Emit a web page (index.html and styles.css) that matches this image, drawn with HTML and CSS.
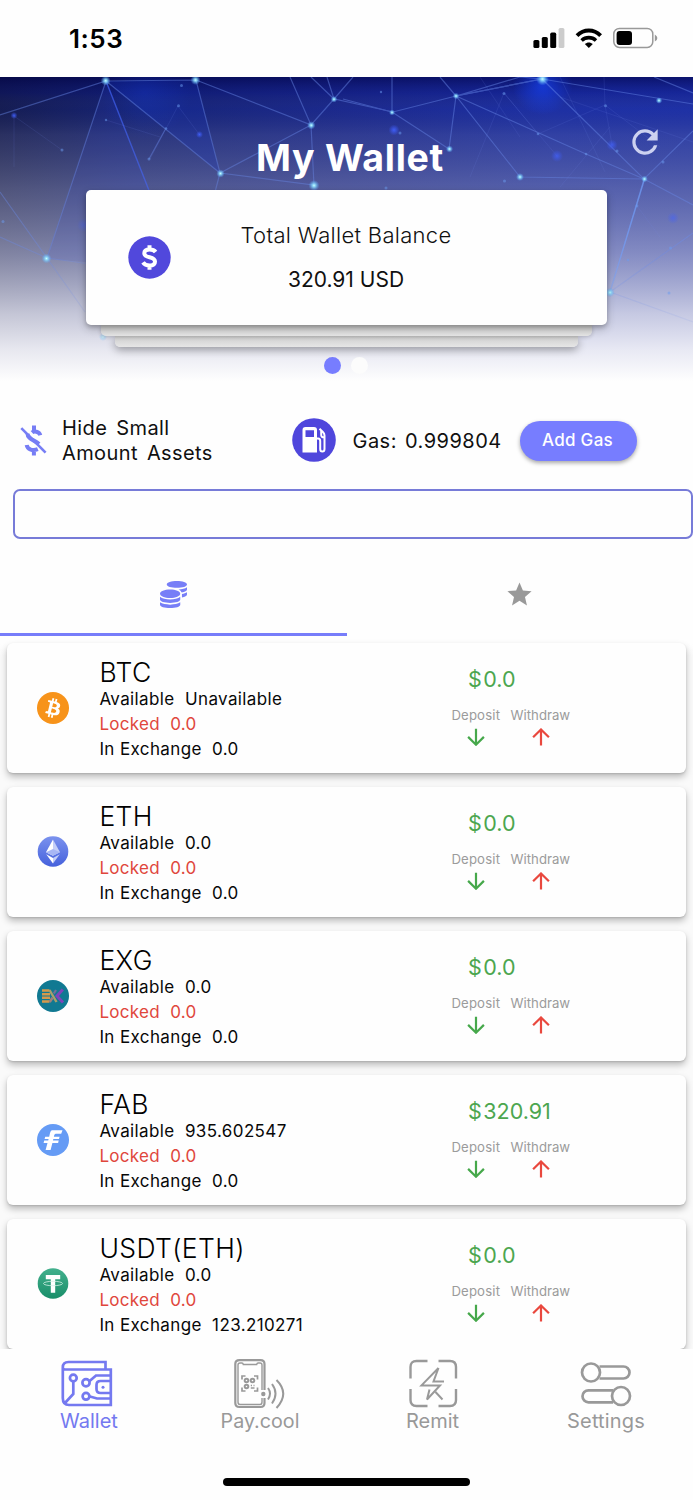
FILE: index.html
```html
<!DOCTYPE html>
<html lang="en">
<head>
<meta charset="utf-8">
<title>My Wallet</title>
<link rel="stylesheet" href="styles.css">
</head>
<body>
<svg class="defs" width="0" height="0" aria-hidden="true">
  <defs>
    <symbol id="down" viewBox="0 0 18 18"><path d="M9 .8V16.6M1.1 8.9L9 16.7L16.9 8.9" fill="none" stroke="currentColor" stroke-width="2.2"/></symbol>
    <symbol id="up" viewBox="0 0 18 18"><path d="M9 17.4V1.6M1.1 9.3L9 1.5L16.9 9.3" fill="none" stroke="currentColor" stroke-width="2.2"/></symbol>
  </defs>
</svg>
<div class="screen">
  <header class="status">
    <span class="time">1:53</span>
    <svg class="status-icons" width="126" height="24" viewBox="532 26 126 24">
      <rect x="533.4" y="40" width="6" height="8" rx="1.6"/><rect x="541.8" y="37" width="6" height="11" rx="1.6"/><rect x="550.2" y="32.6" width="6" height="15.4" rx="1.6"/><rect x="558.6" y="28" width="5.8" height="20" rx="1.6" fill="#ccc"/>
      <path d="M577 35.6C583.8 28.9 593.8 28.9 600.6 35.6" fill="none" stroke="#000" stroke-width="4"/>
      <path d="M581.6 40.5C585.8 36.7 591.8 36.7 596 40.5" fill="none" stroke="#000" stroke-width="3.6"/>
      <path d="M584.8 44.1C587.2 42 590.4 42 592.8 44.1L588.8 48Z"/>
      <rect x="613.8" y="28.4" width="39" height="19" rx="5.6" fill="none" stroke="#999" stroke-width="1.5"/>
      <rect x="616.6" y="31" width="15.4" height="14" rx="3"/>
      <path d="M654.8 34.5Q657.4 36 657.4 38T654.8 41.5Z" fill="#999"/>
    </svg>
  </header>

  <section class="hero">
    <svg class="network" width="693" height="320" viewBox="0 0 693 320">
      <defs>
        <linearGradient id="base"><stop offset="0" stop-color="#111955"/><stop offset=".2" stop-color="#13217a"/><stop offset=".5" stop-color="#182794"/><stop offset=".8" stop-color="#1a2eac"/><stop offset="1" stop-color="#1b2fae"/></linearGradient>
        <linearGradient id="fade" x2="0" y2="1"><stop offset="0" stop-color="#000040" stop-opacity=".6"/><stop offset=".05" stop-color="#0c1060" stop-opacity=".28"/><stop offset=".1" stop-color="#444" stop-opacity=".08"/><stop offset=".18" stop-color="#808088" stop-opacity=".23"/><stop offset=".35" stop-color="#a0a0ac" stop-opacity=".44"/><stop offset=".55" stop-color="#c4c4d0" stop-opacity=".62"/><stop offset=".74" stop-color="#e4e4ec" stop-opacity=".85"/><stop offset=".85" stop-color="#f2f2f7" stop-opacity=".95"/><stop offset=".95" stop-color="#fefefe"/></linearGradient>
        <linearGradient id="lineFade" x2="0" y2="1"><stop offset="0" stop-color="#fff"/><stop offset=".5" stop-color="#ccc"/><stop offset=".75" stop-color="#444"/><stop offset=".85" stop-color="#000"/></linearGradient>
        <mask id="lineMask" maskUnits="userSpaceOnUse" x="0" y="0" width="693" height="320"><rect width="693" height="320" fill="url(#lineFade)"/></mask>
        <radialGradient id="glow"><stop offset="0" stop-color="#1746ff" stop-opacity=".8"/><stop offset="1" stop-color="#1746ff" stop-opacity="0"/></radialGradient>
        <radialGradient id="node"><stop offset="0" stop-color="#cbffff"/><stop offset=".3" stop-color="#8ee0ff" stop-opacity=".85"/><stop offset="1" stop-color="#58a9ff" stop-opacity="0"/></radialGradient>
        <radialGradient id="blue"><stop offset="0" stop-color="#4262ff" stop-opacity=".9"/><stop offset="1" stop-color="#3e5cff" stop-opacity="0"/></radialGradient>
      </defs>
      <rect width="693" height="320" fill="url(#base)"/>
      <rect width="693" height="320" fill="url(#fade)"/>
      <path d="M106 4L196 3L220 96Z" fill="#1738c8" opacity=".22"/>
      <path d="M106 4L46 182L150 190V116Z" fill="#334bd0" opacity=".15"/>
      <circle cx="542.5" cy="8" r="30" fill="url(#glow)" opacity=".8"/>
      <circle cx="145" cy="16" r="46" fill="url(#glow)" opacity=".22"/>
      <g mask="url(#lineMask)">
        <g fill="none" stroke="#6c8cec" stroke-width="1.2" opacity=".45">
          <path d="M0 38L106 4L47 181L0 115M106 4L220 96L311 48L334 22L393 35L456 19L542 2L693 27M106 4L196 3L220 96L314 108L311 48L196 3M220 96L215 115"/>
          <path d="M290 0L311 48M311 0L334 22L327 0M334 22L353 0M343 22L392 35V0M392 35L449 72L456 19L520 100L644 102L586 77L456 19L542 2L644 102L693 54M542 2L520 0L456 19L440 0M644 102L693 128M644 102L610 215L693 156M610 215L693 245M0 160L47 181L90 187L47 181L85 235M166 51L149 82M654 0L693 16"/>
        </g>
        <path d="M106 4L150 116" fill="none" stroke="#4568ff" stroke-width="1.4" opacity=".65"/>
        <path d="M644.5 102L610 215" stroke="#74a5ff" stroke-width="1.4" opacity=".7"/>
        <path d="M504 16L470 100M538 57L504 16L557 79M605 28L612 68M605 28L538 57M605 28L660 70M178 29L199 57M178 29L150 82M62 73L14 39V90M106 43L160 60M637 129L660 160M604 0L605 28M480 0L520 60M560 0L605 95M610 50L560 110M560 20L693 65" fill="none" stroke="#7b8df0" stroke-width=".8" opacity=".17"/>
      </g>
      <g fill="url(#node)">
        <circle cx="105.7" cy="3.7" r="5"/><circle cx="195.5" cy="3" r="5"/><circle cx="220.5" cy="96.5" r="4.2"/><circle cx="311.3" cy="48.3" r="4.2"/><circle cx="314" cy="108.5" r="5.5"/><circle cx="334" cy="22.3" r="3.3"/><circle cx="46.5" cy="181.5" r="5"/><circle cx="392" cy="35.5" r="3"/><circle cx="456" cy="19" r="3.3"/><circle cx="449.5" cy="72" r="3.6"/><circle cx="542.5" cy="2" r="6.5"/><circle cx="520" cy="100" r="4"/><circle cx="644.5" cy="102" r="3.4"/><circle cx="610" cy="215.5" r="4.6"/><circle cx="659" cy="23.5" r="3.3"/><circle cx="103" cy="260" r="4" opacity=".5"/>
      </g>
      <g fill="url(#blue)">
        <circle cx="14" cy="38.5" r="3.5"/><circle cx="199.5" cy="57.5" r="3.5"/><circle cx="394" cy="53" r="5.5"/><circle cx="557" cy="79" r="6" opacity=".8"/><circle cx="612" cy="68" r="5.5" opacity=".8"/><circle cx="673" cy="141" r="6" opacity=".6"/><circle cx="84" cy="148" r="7" opacity=".4"/>
      </g>
      <g fill="#6c9cf0" opacity=".5">
        <circle cx="62" cy="73" r="1.5"/><circle cx="106" cy="43" r="1.2"/><circle cx="178.5" cy="28.7" r="1.5"/><circle cx="181.5" cy="8.5" r="1.5"/><circle cx="166" cy="51.5" r="1.3"/><circle cx="149" cy="82" r="1.5"/><circle cx="3" cy="144.5" r="1.5"/><circle cx="504" cy="16.5" r="1.5"/><circle cx="381" cy="15" r="1.2"/><circle cx="400" cy="56" r="1.5"/><circle cx="386" cy="111" r="1.5"/><circle cx="538" cy="57" r="1.3"/><circle cx="504.5" cy="104" r="1.5"/><circle cx="605.5" cy="28.7" r="1.5"/><circle cx="617" cy="74" r="1.5"/><circle cx="586" cy="77" r="1.3"/><circle cx="637" cy="129" r="1.4"/><circle cx="663" cy="85" r="1.5"/><circle cx="670.5" cy="171" r="1.5"/><circle cx="628" cy="183" r="1.3"/><circle cx="669" cy="216" r="1.5"/>
      </g>
    </svg>
    <div class="titlebar">
      <h1 class="title">My Wallet</h1>
      <svg class="refresh" width="38" height="38" viewBox="0 0 24 24"><path fill="#ccd1f0" d="M17.65 6.35A7.96 7.96 0 0 0 12 4a8 8 0 1 0 7.73 10h-2.08A6 6 0 1 1 12 6c1.66 0 3.14.69 4.22 1.78L13 11h7V4z"/></svg>
    </div>
    <div class="stack">
      <div class="balance">
        <svg class="coin" width="43" height="43" viewBox="0 0 43 43"><circle cx="21.5" cy="21.5" r="21.2" fill="#5148dc"/><path d="M27.6 16C26.2 14 24.3 13.6 21.5 13.6C18.3 13.6 16.3 15 16.3 17.2C16.3 22.9 27 19.6 27 25.6C27 28.2 24.8 29.6 21.5 29.6C18.6 29.6 16.4 28.6 15 26.4M21.5 9.3V13.5M21.5 29.5V33.7" fill="none" stroke="#fff" stroke-width="4"/></svg>
        <div class="balance-text"><span class="balance-label">Total Wallet Balance</span><span class="balance-value">320.91 USD</span></div>
      </div>
      <div class="layer layer-two"></div>
      <div class="layer layer-three"></div>
    </div>
    <div class="dots"><i class="dot active"></i><i class="dot"></i></div>
  </section>

  <section class="tools">
    <svg class="hide-icon" width="27" height="31" viewBox="0 0 27 31"><path d="M12 7.5C14 5.6 19.2 6.4 20.3 10.3M14 .5V6M6.7 20.1C7.3 24.6 13 26.2 17.8 24.2M13.9 25V30.5M7.5 8.4C7.5 14.5 15 15 19 19" fill="none" stroke="#767df5" stroke-width="4"/><path d="M1.3 3.2L25.6 27.6" fill="none" stroke="#767df5" stroke-width="2.6"/></svg>
    <p class="hide-text">Hide Small<br>Amount Assets</p>
    <svg class="gas-icon" width="44" height="44" viewBox="0 0 44 44"><circle cx="22" cy="22" r="21.8" fill="#4f46dc"/><path fill="#fff" fill-rule="evenodd" d="M13.5 9H22Q25 9 25 12V34.5H10.5V12Q10.5 9 13.5 9ZM13.5 12.2V19H22V12.2Z"/><path d="M24.5 20.5H26.2Q28.2 20.5 28.2 23V31C28.2 34.4 32.5 34.4 32.5 31V17.5Q32.5 15.5 30.9 14L27.5 10.8M29.2 12.5V17Q29.2 19.6 32.5 19.3" fill="none" stroke="#fff" stroke-width="2"/></svg>
    <span class="gas-text">Gas: 0.999804</span>
    <button class="add-gas">Add Gas</button>
  </section>

  <input class="search" type="text" aria-label="Search">

  <nav class="tabs">
    <div class="tab selected"><svg width="27" height="27" viewBox="0 0 512 512"><path fill="#777ef7" d="M0 405.300V448c0 35.300 86 64 192 64s192-28.700 192-64v-42.700C342.700 434.400 267.200 448 192 448S41.300 434.400 0 405.300zM320 128c106 0 192-28.700 192-64S426 0 320 0 128 28.700 128 64s86 64 192 64zM0 300.400V352c0 35.300 86 64 192 64s192-28.700 192-64v-51.600c-41.300 34-116.900 51.600-192 51.600S41.300 334.400 0 300.400zm416 11c57.300-11.100 96-31.700 96-55.400v-42.700c-23.200 16.400-57.300 27.600-96 34.500v63.600zM192 160C86 160 0 195.800 0 240s86 80 192 80 192-35.800 192-80-86-80-192-80zm219.300 56.300c60-10.800 100.700-32 100.700-56.300v-42.700c-35.500 25.100-96.500 38.600-160.700 41.800 29.500 14.300 51.200 33.500 60 57.200z"/></svg></div>
    <div class="tab"><svg width="29" height="29" viewBox="0 0 24 24"><path fill="#999" d="M12 17.27L18.18 21l-1.64-7.03L22 9.24l-7.19-.61L12 2 9.19 8.63 2 9.24l5.46 4.73L5.82 21z"/></svg></div>
  </nav>

  <main class="list">
    <article class="card">
      <svg class="token" width="32" height="32" viewBox="0 0 32 32"><circle cx="16" cy="16" r="16" fill="#f7931a"/><path fill="#fff" fill-rule="evenodd" d="M23.190 14.020c.31-2.100-1.290-3.230-3.480-3.980l.71-2.850-1.730-.43-.69 2.770-1.390-.33.700-2.790-1.740-.43-.71 2.840-3.500-.87-.46 1.850s1.280.3 1.260.31c.7.180.83.640.8 1.010l-1.940 7.780c-.9.210-.3.530-.79.410.2.020-1.260-.31-1.260-.31l-.86 1.990 3.340.84-.71 2.880 1.730.43.720-2.850 1.380.36-.71 2.830 1.740.43.720-2.870c2.970.56 5.200.33 6.140-2.350.76-2.160-.04-3.410-1.600-4.220 1.140-.26 2-1.010 2.230-2.560zm-3.980 5.580c-.53 2.160-4.170.99-5.350.7l.95-3.820c1.180.29 4.960.88 4.400 3.120zm.54-5.610c-.49 1.960-3.520.96-4.500.72l.87-3.470c.98.250 4.140.7 3.630 2.750z"/></svg>
      <div class="info"><h2>BTC</h2><p>Available&nbsp; Unavailable</p><p class="locked">Locked&nbsp; 0.0</p><p>In Exchange&nbsp; 0.0</p></div>
      <div class="value"><span class="price">$<b>0.0</b></span><div class="actions"><span class="action deposit">Deposit<svg width="18" height="18"><use href="#down"/></svg></span><span class="action withdraw">Withdraw<svg width="18" height="18"><use href="#up"/></svg></span></div></div>
    </article>
    <article class="card">
      <svg class="token" width="32" height="32" viewBox="0 0 32 32"><defs><linearGradient id="eth" x2="0" y2="1"><stop stop-color="#7b92ee"/><stop offset="1" stop-color="#4561dc"/></linearGradient></defs><circle cx="16" cy="15.5" r="15.3" fill="url(#eth)"/><path fill="#fff" d="M16 3.5L9 16.2L16 19.8Z"/><path fill="#c5cff8" d="M16 3.5L23 16.2L16 19.8Z"/><path fill="#a8b7f4" d="M9 16.2L16 13L23 16.2L16 19.8Z"/><path fill="#fff" d="M9.2 18.2L16 21.9V27.5Z"/><path fill="#c5cff8" d="M22.8 18.2L16 21.9V27.5Z"/></svg>
      <div class="info"><h2>ETH</h2><p>Available&nbsp; 0.0</p><p class="locked">Locked&nbsp; 0.0</p><p>In Exchange&nbsp; 0.0</p></div>
      <div class="value"><span class="price">$<b>0.0</b></span><div class="actions"><span class="action deposit">Deposit<svg width="18" height="18"><use href="#down"/></svg></span><span class="action withdraw">Withdraw<svg width="18" height="18"><use href="#up"/></svg></span></div></div>
    </article>
    <article class="card">
      <svg class="token" width="32" height="32" viewBox="0 0 32 32"><circle cx="16" cy="16" r="16" fill="#117992"/><path d="M5 10.5H12.5M5 14.2H13M5 17.8H13M5 21.5H12.5" stroke="#d59a4c" stroke-width="2.600"/><path d="M12.5 10L19.5 22" stroke="#a8a06b" stroke-width="2.4"/><path d="M12.7 22L15.5 17.8" stroke="#a27f7b" stroke-width="2.6"/><path d="M25.8 9.5L20 16L26 22.5" fill="none" stroke="#7e44bb" stroke-width="3"/><path d="M16.8 13.5L19 10" stroke="#746f9a" stroke-width="2.2"/></svg>
      <div class="info"><h2>EXG</h2><p>Available&nbsp; 0.0</p><p class="locked">Locked&nbsp; 0.0</p><p>In Exchange&nbsp; 0.0</p></div>
      <div class="value"><span class="price">$<b>0.0</b></span><div class="actions"><span class="action deposit">Deposit<svg width="18" height="18"><use href="#down"/></svg></span><span class="action withdraw">Withdraw<svg width="18" height="18"><use href="#up"/></svg></span></div></div>
    </article>
    <article class="card">
      <svg class="token" width="32" height="32" viewBox="0 0 32 32"><circle cx="16" cy="16" r="16" fill="#659bf5"/><path fill="#fff" d="M14.7 6.3H25.5L24.2 9.7H18.7Q17.6 9.7 17.2 11.2L16.9 12.7H22.6L22 15.1H16.3L16 16.5H21.7L21.1 18.9H15.4L13.6 26H8.6L10.5 18.9H6.6L7.2 16.5H11.2L11.6 15.1H7.6L8.2 12.7H12.2L12.9 9.4Q13.3 7 14.7 6.3Z"/></svg>
      <div class="info"><h2>FAB</h2><p>Available&nbsp; 935.602547</p><p class="locked">Locked&nbsp; 0.0</p><p>In Exchange&nbsp; 0.0</p></div>
      <div class="value"><span class="price">$<b>320.91</b></span><div class="actions"><span class="action deposit">Deposit<svg width="18" height="18"><use href="#down"/></svg></span><span class="action withdraw">Withdraw<svg width="18" height="18"><use href="#up"/></svg></span></div></div>
    </article>
    <article class="card">
      <svg class="token" width="32" height="32" viewBox="0 0 32 32"><defs><linearGradient id="usdt" x2="0" y2="1"><stop stop-color="#43b08d"/><stop offset="1" stop-color="#198e69"/></linearGradient></defs><circle cx="16" cy="15.5" r="15.3" fill="url(#usdt)"/><path fill="#fff" d="M8.8 7H23.2V11.2H18.2V24.8H13.8V11.2H8.8Z"/><ellipse cx="16" cy="15.5" rx="9.5" ry="2.2" fill="none" stroke="#d5f1e7" stroke-width=".8"/></svg>
      <div class="info"><h2>USDT(ETH)</h2><p>Available&nbsp; 0.0</p><p class="locked">Locked&nbsp; 0.0</p><p>In Exchange&nbsp; 123.210271</p></div>
      <div class="value"><span class="price">$<b>0.0</b></span><div class="actions"><span class="action deposit">Deposit<svg width="18" height="18"><use href="#down"/></svg></span><span class="action withdraw">Withdraw<svg width="18" height="18"><use href="#up"/></svg></span></div></div>
    </article>
  </main>

  <footer class="bottom">
    <nav class="nav">
      <a class="nav-item current">
        <svg class="wallet-icon" width="52" height="50" viewBox="0 0 52 50"><g fill="none" stroke="currentColor" stroke-width="2.7"><path d="M1.8 39V8.5Q1.8 3 7.5 3H44.5V10.5H4Q1.8 10.5 1.8 8.5M44.5 10.5H49.8V46H8Q1.8 46 1.8 39M3.5 44.5L12.3 35V23M50 16.5H35L28 22.5M50 39.5H36L28 37.3M50 22H39.5Q35.5 22 35.5 26V30Q35.5 34 39.5 34H50"/><circle cx="12.3" cy="19" r="3.4"/><circle cx="25" cy="23.8" r="3.6"/><circle cx="25" cy="37.3" r="3.4"/></g><circle cx="42" cy="28.2" r="1.5" fill="currentColor"/></svg>
        <span>Wallet</span>
      </a>
      <a class="nav-item pay">
        <svg width="52" height="50" viewBox="0 0 52 50"><g fill="none" stroke="currentColor"><path d="M30.5 31V5Q30.5 1.200 26.5 1.200H5.5Q1.3 1.2 1.3 5V44Q1.3 48 5.5 48H26.5Q30.5 48 30.5 44V39" stroke-width="2.2"/><path d="M28 31V6Q28 4 26 4H24Q23 4 22.7 5.5H9.3Q9 4 8 4H6Q4 4 4 6V43Q4 45.5 6 45.5H26Q28 45.5 28 43V39" stroke-width="1.4"/><path d="M8 20.500V17H11.5M20 17H23.5V20.5M8 28.5V32H11.5M20 32H23.5V28.5" stroke-width="1.7"/><circle cx="12.5" cy="21.5" r="1.8" stroke-width="2"/><circle cx="18.5" cy="21.5" r="1.8" stroke-width="2"/><circle cx="12.5" cy="27.5" r="1.8" stroke-width="2"/><path d="M16.8 26.5H18M19.5 26.5H20.5M16.8 29H20.5" stroke-width="1.5"/><path d="M34 29Q38 34.500 34 40.500M38 25Q45 34.500 38 44.500M42.500 21Q56 34.500 42.500 49" stroke-width="2"/></g><circle cx="29.3" cy="35" r="2.2" fill="currentColor"/></svg>
        <span>Pay.cool</span>
      </a>
      <a class="nav-item">
        <svg width="52" height="50" viewBox="0 0 52 50"><g fill="none" stroke="currentColor"><path d="M3.500 19.500V8Q3.500 2 9.500 2H20.500M31.500 2H43Q49 2 49 8V19.500M49 30V41Q49 47 43 47H31.500M20.500 47H9.500Q3.500 47 3.500 41V30" stroke-width="2.400"/><path d="M31.500 9L14.500 26.400H33L20 40.500L22.500 30.500M31.500 9L26.500 22.500H37M28.500 33L35.500 40.500" stroke-width="2"/></g></svg>
        <span>Remit</span>
      </a>
      <a class="nav-item settings">
        <svg width="52" height="50" viewBox="0 0 52 50"><g fill="none" stroke="currentColor" stroke-width="2.7"><circle cx="11" cy="13.5" r="9"/><path d="M19.5 7.5H43.5A6 6 0 0 1 43.5 19.5H19.5M33 31.3H8.5A6 6 0 0 0 8.5 43.3H33"/><circle cx="41" cy="37" r="9"/></g></svg>
        <span>Settings</span>
      </a>
    </nav>
    <div class="home"></div>
  </footer>
</div>
</body>
</html>
```
FILE: styles.css
```css
* { box-sizing: border-box; }
body { margin: 0; background: #fff; color: #101010; font-family: Inter, "Liberation Sans", sans-serif; }
.defs { display: block; height: 0; }
.screen { width: 693px; height: 1500px; display: flex; flex-direction: column; overflow: hidden; background: #fefefe; }
svg { display: block; flex: none; }
h1, h2, p { margin: 0; }

.status { height: 77px; flex: none; display: flex; align-items: flex-start; justify-content: space-between; padding: 23px 35px 0 69px; }
.time { font-size: 26px; line-height: 32px; font-weight: 600; letter-spacing: .5px; color: #000; }
.status-icons { margin-top: 3px; }

.hero { position: relative; height: 312px; flex: none; display: flex; flex-direction: column; align-items: center; padding-top: 56px; }
.network { position: absolute; left: 0; top: 0; }
.titlebar { position: relative; width: 100%; height: 57px; display: flex; justify-content: center; }
.title { font-size: 37.5px; line-height: 50px; font-weight: 700; color: #fff; letter-spacing: .7px; margin-left: 7px; }
.refresh { position: absolute; right: 29.5px; top: -10px; }
.stack { position: relative; display: flex; flex-direction: column; align-items: center; }
.balance { position: relative; z-index: 3; width: 521px; height: 135px; border-radius: 5px; background: #fefefe; box-shadow: 0 2px 4px rgba(0,0,0,.2), 0 4px 10px rgba(0,0,0,.2); display: flex; align-items: center; padding-left: 42px; }
.balance-text { width: 350px; display: flex; flex-direction: column; align-items: center; gap: 13px; margin-top: -1px; }
.balance-label { font-size: 22px; line-height: 32px; font-weight: 300; letter-spacing: .3px; }
.balance-value { font-size: 21px; line-height: 32px; }
.layer { position: relative; background: linear-gradient(#cdcdcd, #e6e6e6); border-radius: 0 0 5px 5px; box-shadow: 0 3px 8px rgba(0,0,0,.35); }
.layer-two { z-index: 2; width: 491px; height: 11px; box-shadow: 0 1px 4px rgba(0,0,0,.2); }
.layer-three { z-index: 1; width: 463px; height: 10.5px; }
.dots { position: relative; display: flex; gap: 10px; margin: 10px 1px 0 0; }
.dot { width: 17px; height: 17px; border-radius: 50%; background: #fcfcfc; }
.dot.active { background: #777dff; }

.tools { height: 100px; flex: none; display: flex; align-items: center; padding: 3px 0 0 20px; }
.hide-text { margin: 1px 0 0 15px; width: 230px; font-size: 20px; line-height: 25px; letter-spacing: .4px; word-spacing: 3px; }
.gas-text { margin-left: 16.5px; width: 167px; font-size: 20px; letter-spacing: .48px; word-spacing: 2px; }
.hide-icon, .gas-icon { margin-top: -1px; }
.add-gas { width: 117px; height: 40px; border: 0; border-radius: 20px; padding: 0 1px 2px 0; background: #777dff; color: #fff; font: 500 17px Inter, sans-serif; letter-spacing: .3px; box-shadow: 0 2px 4px rgba(0,0,0,.35); }
.search { display: block; flex: none; width: 679.5px; height: 50px; margin-left: 13.4px; border: 2px solid #777bd8; border-radius: 7px; background: #fefefe; padding: 0 12px; }
.tabs { height: 97px; flex: none; display: grid; grid-template-columns: 346.5px 1fr; }
.tab { display: flex; align-items: center; justify-content: center; padding: 14px 0 0 0; }
.tab.selected { border-bottom: 3.5px solid #777dfa; padding-top: 16px; }

.list { flex: 1; min-height: 0; overflow: hidden; display: flex; flex-direction: column; gap: 14px; padding: 7px 7px 0; background: linear-gradient(#fefefe 8px, #fafafa 20px); }
.card { height: 130px; flex: none; display: flex; border-radius: 6px; background: #fefefe; box-shadow: 0 1px 2px rgba(0,0,0,.13), 0 4px 7px rgba(0,0,0,.25); padding: 12px 0 0 30px; }
.token { margin-top: 37px; }
.info { margin-left: 30.4px; width: 352px; white-space: nowrap; }
.info h2 { font-size: 26.5px; line-height: 34px; font-weight: 300; letter-spacing: .4px; margin-bottom: -2px; color: #000; }
.info p { font-size: 17px; line-height: 25px; letter-spacing: .38px; color: #080808; }
.info .locked { color: #e0463c; letter-spacing: .3px; }
.value { padding-top: 10px; }
.price { display: block; margin-left: 16.6px; color: #4ca64f; font-size: 21.5px; line-height: 28px; }
.price b { font-weight: 400; margin-left: 1.5px; }
.actions { display: flex; gap: 10.5px; margin-top: 12px; }
.action { display: flex; flex-direction: column; align-items: center; font-size: 13.2px; line-height: 20px; color: #9b9b9b; }
.action svg { margin: 2.5px 0 0 1px; }
.deposit { letter-spacing: .15px; }
.deposit svg { color: #46a84b; }
.withdraw svg { color: #e9483e; }

.bottom { position: relative; height: 151px; flex: none; background: #fefefe; }
.nav { display: grid; grid-template-columns: 178px 164px 181px 166px; padding-top: 10px; }
.nav-item { display: flex; flex-direction: column; align-items: center; color: #999; font-size: 20px; line-height: 24px; }
.nav-item.current { color: #7479f0; }
.wallet-icon { margin: 0 5px 0 0; }
.pay span { font-size: 19.7px; }
.settings span { letter-spacing: .15px; }
.home { width: 247px; height: 8px; border-radius: 4px; background: #000; margin: 45px auto 0; }
```
